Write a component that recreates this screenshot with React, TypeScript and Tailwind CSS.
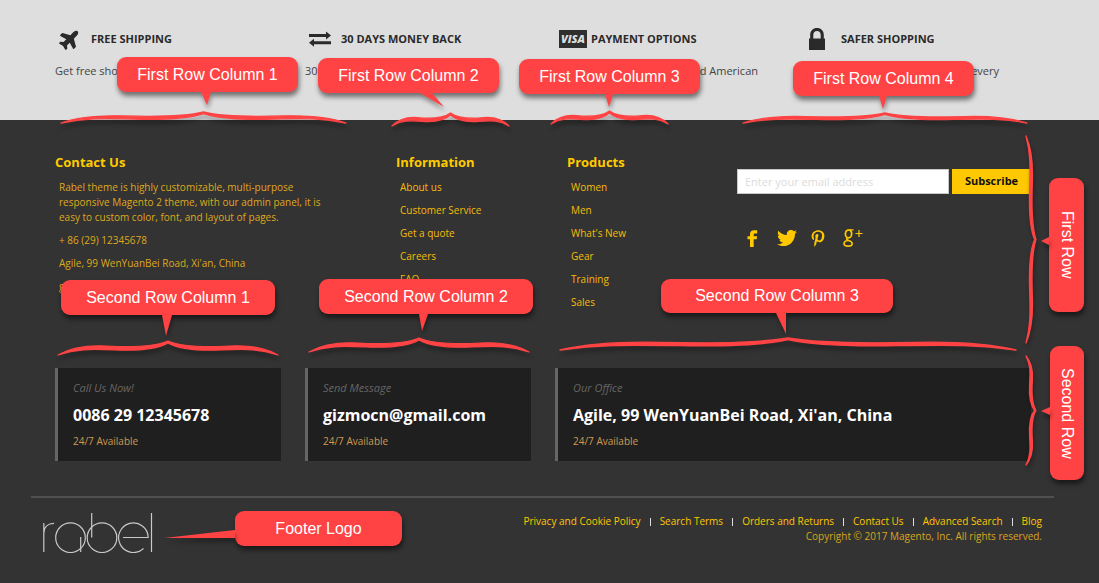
import type { ReactNode } from "react";
import { FaPinterestP, FaPlane, FaTwitter } from "react-icons/fa";

type Brace = { start: number; end: number; tip: number; base: number };

const braces: Brace[] = [
  { start: 61, end: 346, tip: 112, base: 123 },
  { start: 392, end: 509, tip: 113, base: 126 },
  { start: 551, end: 668, tip: 111, base: 124 },
  { start: 743, end: 1027, tip: 113, base: 123 },
  { start: 58, end: 278, tip: 341, base: 355 },
  { start: 309, end: 529, tip: 338, base: 352 },
  { start: 560, end: 1016, tip: 338, base: 350 },
];

const sideBraces: Brace[] = [
  { start: 136, end: 343, tip: 1036, base: 1026 },
  { start: 356, end: 465, tip: 1036, base: 1026 },
];

const tails = [
  "201,92 211,92 207,105",
  "420,93 432,93 444,107",
  "605,94 613,94 609,107",
  "879,96 887,96 883,109",
  "162,315 172,315 166,336",
  "419,314 428,314 422,331",
  "776,313 786,313 786,334",
  "1049,237 1049,245 1041,241",
  "1050,407 1050,415 1041,411",
  "235,530 235,538 164,538",
];

const callouts = [
  { text: "First Row Column 1", box: "left-[117px] top-[57px] h-[35px] w-[181px]" },
  { text: "First Row Column 2", box: "left-[318px] top-[58px] h-[35px] w-[181px]" },
  { text: "First Row Column 3", box: "left-[519px] top-[59px] h-[35px] w-[181px]" },
  { text: "First Row Column 4", box: "left-[793px] top-[61px] h-[35px] w-[181px]" },
  { text: "Second Row Column 1", box: "left-[61px] top-[280px] h-[35px] w-[214px]" },
  { text: "Second Row Column 2", box: "left-[319px] top-[279px] h-[35px] w-[214px]" },
  { text: "Second Row Column 3", box: "left-[661px] top-[279px] h-[34px] w-[232px]" },
  { text: "First Row", box: "left-[1049px] top-[178px] h-[134px] w-[35px] [writing-mode:vertical-rl]" },
  { text: "Second Row", box: "left-[1050px] top-[346px] h-[134px] w-[34px] [writing-mode:vertical-rl]" },
  { text: "Footer Logo", box: "left-[235px] top-[511px] h-[35px] w-[167px]" },
];

function bracePath({ start, end, tip, base }: Brace, vertical = false) {
  const p = (u: number, v: number) => {
    const along = start + u * (end - start);
    const across = tip + v * (base - tip);
    return vertical ? `${across.toFixed(2)} ${along.toFixed(2)}` : `${along.toFixed(2)} ${across.toFixed(2)}`;
  };
  return [
    `M${p(0, 1)}`,
    `C${p(0.06, 0.45)} ${p(0.14, 0.3)} ${p(0.22, 0.36)}`,
    `C${p(0.34, 0.46)} ${p(0.44, 0.4)} ${p(0.5, 0)}`,
    `C${p(0.56, 0.4)} ${p(0.66, 0.46)} ${p(0.78, 0.36)}`,
    `C${p(0.86, 0.3)} ${p(0.94, 0.45)} ${p(1, 1)}`,
    `C${p(0.92, 0.56)} ${p(0.86, 0.56)} ${p(0.74, 0.64)}`,
    `C${p(0.62, 0.72)} ${p(0.54, 0.5)} ${p(0.5, 0.14)}`,
    `C${p(0.46, 0.5)} ${p(0.38, 0.72)} ${p(0.26, 0.64)}`,
    `C${p(0.14, 0.56)} ${p(0.08, 0.56)} ${p(0, 1)}Z`,
  ].join(" ");
}

function Annotations() {
  return (
    <div className="pointer-events-none absolute inset-0 font-['Liberation_Sans',sans-serif]">
      {callouts.map(({ text, box }) => (
        <div
          key={text}
          className={`absolute flex items-center justify-center rounded-[9px] bg-[#ff4344] text-base whitespace-nowrap text-white shadow-[1px_4px_5px_rgba(0,0,0,0.5)] ${box}`}
        >
          {text}
        </div>
      ))}
      <svg className="absolute top-0 left-0 h-[583px] w-[1099px] drop-shadow-[1px_4px_2px_rgba(0,0,0,0.35)]" viewBox="0 0 1099 583" aria-hidden="true">
        <g fill="#ff4344" stroke="#ff4344" strokeWidth="1.3" strokeLinejoin="round">
          {braces.map((b) => (
            <path key={b.start} d={bracePath(b)} />
          ))}
          {sideBraces.map((b) => (
            <path key={b.start} d={bracePath(b, true)} />
          ))}
        </g>
        <g fill="#ff4344">
          {tails.map((points) => (
            <polygon key={points} points={points} />
          ))}
        </g>
      </svg>
    </div>
  );
}

function ExchangeIcon() {
  return (
    <svg className="h-4 w-[22px]" viewBox="0 0 22 16" fill="currentColor" aria-hidden="true">
      <path d="M0 3h17V.5l5 4-5 4V6H0zM22 10.200H5V7.700l-5 4 5 4v-2.500h17z" />
    </svg>
  );
}

function LockIcon() {
  return (
    <svg className="h-[22px] w-4" viewBox="0 0 16 22" fill="currentColor" aria-hidden="true">
      <path d="M0 10.500h1.200V7C1.200 2.700 4 0 8 0s6.800 2.700 6.800 7v3.500H16V22H0zM4.300 10.500h7.400V7c0-2.600-1.500-4-3.700-4S4.300 4.400 4.300 7z" />
    </svg>
  );
}

function FacebookIcon() {
  return (
    <svg className="h-[17px] w-3" viewBox="0 0 12 17" fill="currentColor" aria-hidden="true">
      <path d="M4 17V9.300H1.500V6.200H4V4.300C4 1.600 5.500.2 8.100.2h3.100v3.200H9.100c-1.100 0-1.400.5-1.400 1.400v1.400h3.400l-.4 3.100h-3V17z" />
    </svg>
  );
}

function PlusIcon() {
  return (
    <svg className="h-[18px] w-5" viewBox="0 0 20 18" fill="none" stroke="currentColor" aria-hidden="true">
      <ellipse cx="5.500" cy="4.900" rx="3.100" ry="3.900" strokeWidth="1.700" />
      <path d="M5.500.8H10.500M7.500 1.500c1 .8 1.300 2 1.200 3" strokeWidth="1.200" />
      <path d="M4.300 8.900c-1.400 1.200-.4 1.900 1.300 2.500 2.200.8 3.600 1.500 3.600 3 0 1.700-1.700 2.700-4.200 2.700S1 16.200 1 14.500c0-1.600 1.500-2.600 4-3" strokeWidth="1.600" />
      <path d="M16 1v7M12.500 4.500h7" strokeWidth="1.200" />
    </svg>
  );
}

function RabelLogo() {
  return (
    <svg className="h-10 w-[110px]" viewBox="0 0 110 40" fill="none" stroke="#c9c9c9" strokeWidth="1.200" role="img" aria-label="rabel">
      <path d="M.8 10v29M.8 20C1 14 5 10.300 11 10.300" />
      <circle cx="27.500" cy="24.700" r="14.800" />
      <path d="M37.700 24v15M48.700 0v24.500" />
      <circle cx="59" cy="24.700" r="14.800" />
      <path d="M80 24.500h25.200A14.800 14.800 0 1 0 100.500 35.500M108.500 0v39" />
    </svg>
  );
}

function Service({ icon, title, children }: { icon: ReactNode; title: string; children: ReactNode }) {
  return (
    <div className="flex flex-col gap-3 whitespace-nowrap">
      <div className="flex h-5 items-center">
        <span className="flex w-9 shrink-0 pl-1">{icon}</span>
        <h2 className="text-[11px] font-bold text-[#2a2a2a]">{title}</h2>
      </div>
      <p className="flex text-[11px] leading-5 text-[#444]">{children}</p>
    </div>
  );
}

function LinkColumn({ title, links }: { title: string; links: string[] }) {
  return (
    <div>
      <h3 className="text-[13px] leading-5 font-bold text-[#ffcb00]">{title}</h3>
      <ul className="mt-2 flex flex-col gap-2 pl-1 text-[10px] leading-[15px] text-[#f6bc08]">
        {links.map((link) => (
          <li key={link}>
            <a href="#">{link}</a>
          </li>
        ))}
      </ul>
    </div>
  );
}

function InfoCard({ label, value, wide = false }: { label: string; value: string; wide?: boolean }) {
  return (
    <div className={`flex flex-col border-l-[3px] border-[#666] bg-[#1f1f1f] px-[15px] py-2.5 ${wide ? "col-span-2" : ""}`}>
      <p className="text-[11px] leading-5 text-[#666] italic">{label}</p>
      <p className="my-1 text-base leading-[26px] font-bold text-white">{value}</p>
      <p className="text-[10px] leading-[19px] text-[#cf9a50]">24/7 Available</p>
    </div>
  );
}

const legalLinks = ["Privacy and Cookie Policy", "Search Terms", "Orders and Returns", "Contact Us", "Advanced Search", "Blog"];

export default function App() {
  return (
    <div className="relative min-h-screen overflow-hidden bg-[#333] font-['Open_Sans',sans-serif]">
      <section className="bg-[#dedede] pt-[29px] pr-11 pb-[39px] pl-[55px] text-[#2a2a2a]">
        <div className="grid grid-cols-4">
          <Service icon={<FaPlane className="size-[22px] -rotate-45" />} title="FREE SHIPPING">
            Get free shop
          </Service>
          <Service icon={<ExchangeIcon />} title="30 DAYS MONEY BACK">
            30
          </Service>
          <Service
            icon={<span className="flex h-[18px] w-7 shrink-0 items-center justify-center bg-[#2f2f2f] text-[11px] font-extrabold text-[#dedede] italic">VISA</span>}
            title="PAYMENT OPTIONS"
          >
            <span className="w-[203px] text-right">nd American</span>
          </Service>
          <Service icon={<LockIcon />} title="SAFER SHOPPING">
            <span className="w-[194px] text-right">every</span>
          </Service>
        </div>
      </section>

      <footer>
        <div className="pt-8 pr-[68px] pl-[55px]">
          <div className="grid grid-cols-[341fr_171fr_170fr_294fr]">
            <div>
              <h3 className="text-[13px] leading-5 font-bold text-[#ffcb00]">Contact Us</h3>
              <div className="mt-2 flex flex-col gap-2 pl-1 text-[10px] leading-[15px] text-[#dfa91c]">
                <p className="max-w-[284px]">
                  Rabel theme is highly customizable, multi-purpose responsive Magento 2 theme, with our admin panel, it is easy to custom color, font, and layout of pages.
                </p>
                <p>+ 86 (29) 12345678</p>
                <p>Agile, 99 WenYuanBei Road, Xi'an, China</p>
                <p>gizmocn@gmail.com</p>
              </div>
            </div>
            <LinkColumn title="Information" links={["About us", "Customer Service", "Get a quote", "Careers", "FAQ"]} />
            <LinkColumn title="Products" links={["Women", "Men", "What's New", "Gear", "Training", "Sales"]} />
            <div className="pt-[17px]">
              <form className="flex gap-[3px]" onSubmit={(e) => e.preventDefault()}>
                <input
                  type="email"
                  aria-label="Email address"
                  placeholder="Enter your email address"
                  className="h-[25px] min-w-0 flex-1 border border-[#c8c8c8] bg-white px-[7px] text-[11px] text-[#333] outline-none placeholder:text-[#dcdcdc]"
                />
                <button type="submit" className="h-[25px] w-[79px] bg-[#ffc800] text-[11px] font-bold text-[#111]">
                  Subscribe
                </button>
              </form>
              <div className="mt-[34px] flex items-center pl-[9px] text-[#ffc800]">
                <a href="#" aria-label="Facebook" className="w-[31px]">
                  <FacebookIcon />
                </a>
                <a href="#" aria-label="Twitter" className="w-[34px]">
                  <FaTwitter className="size-5" />
                </a>
                <a href="#" aria-label="Pinterest" className="w-8">
                  <FaPinterestP className="h-[17px] w-[14px]" />
                </a>
                <a href="#" aria-label="Google Plus">
                  <PlusIcon />
                </a>
              </div>
            </div>
          </div>

          <div className="mt-[58px] grid grid-cols-4 gap-6">
            <InfoCard label="Call Us Now!" value="0086 29 12345678" />
            <InfoCard label="Send Message" value="gizmocn@gmail.com" />
            <InfoCard label="Our Office" value="Agile, 99 WenYuanBei Road, Xi'an, China" wide />
          </div>
        </div>

        <div className="mt-[35px] mr-[45px] ml-[31px] flex items-start justify-between border-t-2 border-[#505050] px-3 pt-[15px]">
          <RabelLogo />
          <div className="pt-px text-right text-[10px] leading-[15px]">
            <ul className="flex justify-end text-[#ffc800]">
              {legalLinks.map((link, i) => (
                <li key={link} className="flex items-center">
                  {i > 0 && <span className="mx-[9px] h-2 w-px bg-[#ddd]" />}
                  <a href="#">{link}</a>
                </li>
              ))}
            </ul>
            <p className="text-[#d9a520]">Copyright © 2017 Magento, Inc. All rights reserved.</p>
          </div>
        </div>
      </footer>

      <Annotations />
    </div>
  );
}
